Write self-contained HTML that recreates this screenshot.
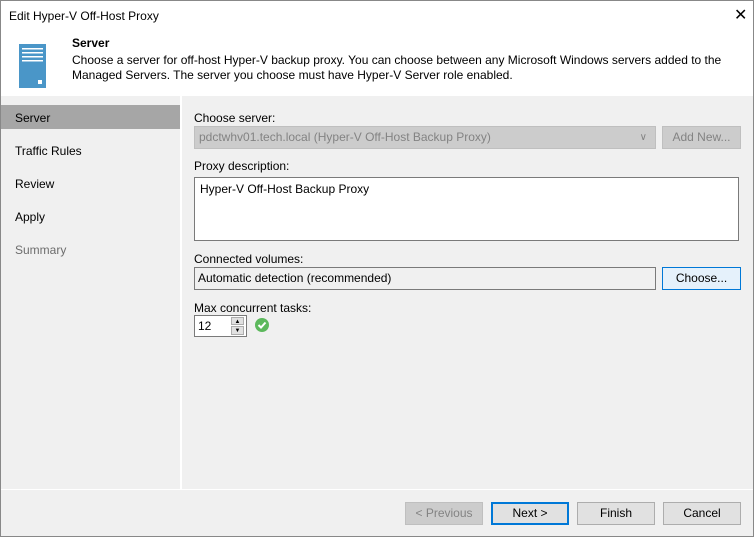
<!DOCTYPE html><html><head><style>
body{margin:0;width:754px;height:537px;overflow:hidden;font-family:"Liberation Sans",sans-serif;font-size:12px;color:#000;background:#f0f0f0}
.win{position:absolute;left:0;top:0;width:752px;height:535px;border:1px solid #888;background:#f0f0f0}
.a{position:absolute}
.btn{position:absolute;height:21px;border:1px solid #adadad;background:#e1e1e1;text-align:center;line-height:21px}
</style></head><body><div class="win">
<div class="a" style="left:0;top:0;width:752px;height:95px;background:#fff"></div>
<div class="a" style="left:8px;top:8px">Edit Hyper-V Off-Host Proxy</div>
<div class="a" style="left:733px;top:4px;font-size:16px">✕</div>
<svg class="a" style="left:18px;top:43px" width="28" height="45"><rect x="0" y="0" width="27" height="44" fill="#4a96c8"/><rect x="3" y="4" width="21" height="1.5" fill="#fff"/><rect x="3" y="8" width="21" height="1.5" fill="#fff"/><rect x="3" y="12" width="21" height="1.5" fill="#fff"/><rect x="3" y="16" width="21" height="1.5" fill="#fff"/><rect x="19" y="36" width="4" height="4" fill="#fff"/></svg>
<div class="a" style="left:71px;top:35px;font-weight:bold">Server</div>
<div class="a" style="left:71px;top:52px;line-height:15px;width:670px">Choose a server for off-host Hyper-V backup proxy. You can choose between any Microsoft Windows servers added to the Managed Servers. The server you choose must have Hyper-V Server role enabled.</div>
<div class="a" style="left:179px;top:95px;width:2px;height:393px;background:#fff"></div>
<div class="a" style="left:0;top:104px;width:179px;height:24px;background:#a6a6a6"></div>
<div class="a" style="left:14px;top:110px">Server</div>
<div class="a" style="left:14px;top:143px">Traffic Rules</div>
<div class="a" style="left:14px;top:176px">Review</div>
<div class="a" style="left:14px;top:209px">Apply</div>
<div class="a" style="left:14px;top:242px;color:#6d6d6d">Summary</div>
<div class="a" style="left:193px;top:110px">Choose server:</div>
<div class="a" style="left:193px;top:125px;width:460px;height:21px;background:#ccc;border:1px solid #bfbfbf;color:#838383;line-height:21px;padding-left:4px;box-sizing:border-box;width:462px;height:23px">pdctwhv01.tech.local (Hyper-V Off-Host Backup Proxy)<span style="position:absolute;right:8px;top:0;font-size:10px">∨</span></div>
<div class="btn" style="left:661px;top:125px;width:77px;background:#ccc;border-color:#bfbfbf;color:#838383">Add New...</div>
<div class="a" style="left:193px;top:158px">Proxy description:</div>
<div class="a" style="left:193px;top:176px;width:545px;height:64px;background:#fff;border:1px solid #7a7a7a;box-sizing:border-box;padding:4px 5px">Hyper-V Off-Host Backup Proxy</div>
<div class="a" style="left:193px;top:251px">Connected volumes:</div>
<div class="a" style="left:193px;top:266px;width:462px;height:23px;border:1px solid #7a7a7a;box-sizing:border-box;background:#f0f0f0;line-height:21px;padding-left:3px">Automatic detection (recommended)</div>
<div class="btn" style="left:661px;top:266px;width:77px;background:#e5f1fb;border-color:#0078d7">Choose...</div>
<div class="a" style="left:193px;top:300px">Max concurrent tasks:</div>
<div class="a" style="left:193px;top:314px;width:53px;height:22px;border:1px solid #7a7a7a;box-sizing:border-box;background:#fff;line-height:20px;padding-left:3px">12</div>
<div class="a" style="left:230px;top:316px;width:13px;height:8px;border:1px solid #adadad;background:#e1e1e1;font-size:6px;line-height:8px;text-align:center;box-sizing:border-box">▲</div>
<div class="a" style="left:230px;top:325px;width:13px;height:9px;border:1px solid #adadad;background:#e1e1e1;font-size:6px;line-height:8px;text-align:center;box-sizing:border-box">▼</div>
<svg class="a" style="left:254px;top:317px" width="14" height="14"><circle cx="7" cy="7" r="7" fill="#5cb85c"/><path d="M3.5 7 L6 9.5 L10.5 4.5" stroke="#fff" stroke-width="2" fill="none"/></svg>
<div class="a" style="left:0;top:488px;width:752px;height:1px;background:#fff"></div>
<div class="btn" style="left:404px;top:501px;width:76px;background:#ccc;border-color:#bfbfbf;color:#838383">&lt; Previous</div>
<div class="btn" style="left:490px;top:501px;width:74px;border:2px solid #0078d7;height:19px;line-height:19px">Next &gt;</div>
<div class="btn" style="left:576px;top:501px;width:76px">Finish</div>
<div class="btn" style="left:662px;top:501px;width:76px">Cancel</div>
</div></body></html>
